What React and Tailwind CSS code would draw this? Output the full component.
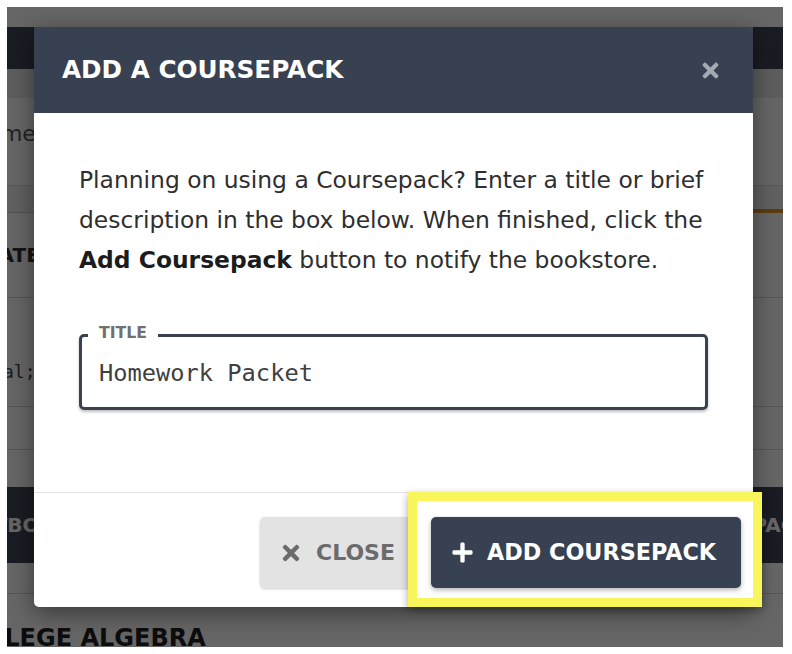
import { FaTimes, FaPlus } from "react-icons/fa";

const sans = "font-['DejaVu_Sans',sans-serif]";
const mono = "font-['DejaVu_Sans_Mono',monospace]";

function BackgroundPage() {
  return (
    <div className={`-ml-[40px] w-[856px] bg-white ${sans}`}>
      <div className="h-[20px]" />
      <div className="h-[42px] bg-[#414857]" />
      <div className="h-[29px] bg-[#ebebeb]" />
      <div className="h-[87px] pl-[4px] pt-[24px] text-[22px] leading-[24px] text-[#555]">Name:</div>
      <div className="flex h-[28px] border-t border-[#d9d9d9] bg-[#f3f3f3]">
        <div className="flex-1 border-b border-[#d0d0d0]" />
        <div className="w-[200px] border-b-[4px] border-[#e0962d]" />
      </div>
      <div className="flex h-[85px] items-center border-b border-[#d6d6d6] pl-[15px] text-[20px] font-bold text-[#333]">DATE</div>
      <div className={`h-[109px] border-b border-[#d6d6d6] pt-[62px] text-[18px] leading-[24px] text-[#444] ${mono}`}>
        <span className="ml-[-29px]">optional;</span>
      </div>
      <div className="h-[43px] border-b border-[#d6d6d6]" />
      <div className="h-[37px]" />
      <div className="flex h-[76px] items-center justify-between bg-[#414857] text-[20px] font-bold text-white">
        <span className="ml-[-16px]">TEXTBOOKS</span>
        <span className="mr-[12px]">ADD COURSEPACK</span>
      </div>
      <div className="h-[31px] border-b border-[#d6d6d6]" />
      <div className="pt-[30px] text-[24px] font-bold leading-[28px] text-[#222]">
        <span className="ml-[-16px]">COLLEGE ALGEBRA</span>
      </div>
    </div>
  );
}

function CoursepackModal() {
  return (
    <div className={`absolute left-[27px] top-[20px] h-[580px] w-[719px] rounded-b-[5px] bg-white shadow-[0_6px_24px_rgba(0,0,0,0.45)] ${sans}`}>
      <div className="flex h-[86px] items-center justify-between bg-[#384152] pl-[28px] pr-[31px]">
        <h2 className="text-[24.7px] font-bold leading-none text-white">ADD A COURSEPACK</h2>
        <FaTimes className="text-[#a4a9b2]" size={23} />
      </div>

      <div className="h-[379px] px-[45px] pt-[47px]">
        <p className="text-[23.4px] leading-[40px] whitespace-nowrap text-[#2e2e2e]">
          Planning on using a Coursepack? Enter a title or brief
          <br />
          description in the box below. When finished, click the
          <br />
          <strong className="font-bold text-[#1c1c1c]">Add Coursepack</strong> button to notify the bookstore.
        </p>

        <fieldset className="mt-[43px] rounded-[5px] border-[3px] border-[#394253] pb-[9px] pl-[6px] shadow-[0_2px_3px_rgba(0,0,0,0.25)]">
          <legend className="px-[11px] pb-[5px] text-[15.7px] font-bold leading-[20px] text-[#707070]">TITLE</legend>
          <input
            readOnly
            value="Homework Packet"
            className={`block h-[50px] w-full bg-transparent pl-[11px] text-[23.7px] text-[#404040] outline-none ${mono}`}
          />
        </fieldset>
      </div>

      <div className="flex justify-end gap-[15px] border-t border-[#e2e2e2] pr-[12px] pt-[24px]">
        <button
          type="button"
          className="flex h-[71px] w-[156px] items-center gap-[13px] rounded-[5px] bg-[#e3e3e3] pl-[19px] text-[22px] font-bold text-[#6b6b6b] shadow-[0_1px_3px_rgba(0,0,0,0.2)]"
        >
          <FaTimes size={24} />
          CLOSE
        </button>
        <div className="relative">
          <div className="absolute -bottom-[19px] -left-[23px] -right-[21px] -top-[25px] border-[9px] border-[#f8f65a] bg-white shadow-[0_3px_8px_rgba(0,0,0,0.35)]" />
          <button
            type="button"
            className="relative flex h-[71px] w-[310px] items-center gap-[13px] rounded-[5px] bg-[#384152] pl-[20px] text-[22.3px] font-bold text-white shadow-[0_2px_5px_rgba(0,0,0,0.3)]"
          >
            <FaPlus size={23} />
            ADD COURSEPACK
          </button>
        </div>
      </div>
    </div>
  );
}

export default function App() {
  return (
    <div className="h-[654px] w-[792px] bg-white p-[7px]">
      <div className="relative h-[640px] w-[776px] overflow-hidden">
        <BackgroundPage />
        <div className="absolute inset-0 bg-black/60" />
        <CoursepackModal />
      </div>
    </div>
  );
}
